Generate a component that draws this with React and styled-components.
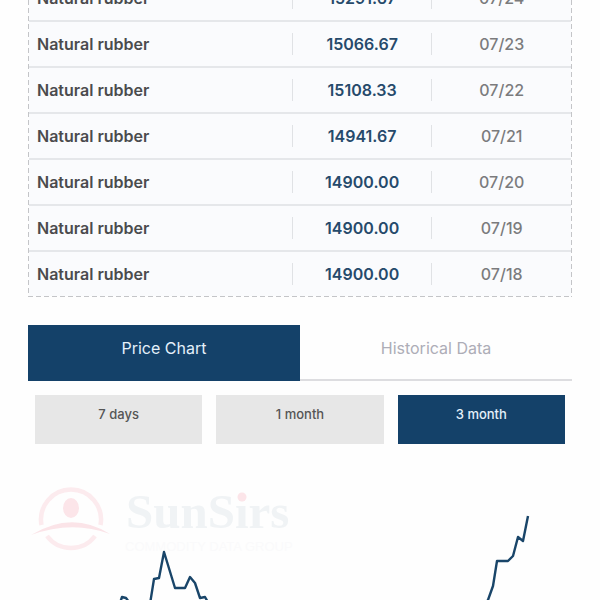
import React, { useState } from 'react';
import styled, { createGlobalStyle } from 'styled-components';

const GlobalStyle = createGlobalStyle`
  html, body {
    margin: 0;
    background: #fefefe;
    overflow: hidden;
  }

  * {
    box-sizing: border-box;
  }
`;

const Page = styled.main`
  padding: 0 28px;
  height: 100vh;
  overflow: hidden;
  font-family: Inter, "Liberation Sans", sans-serif;
`;

/* The list is scrolled, so its first row is cut by the top edge */
const PriceList = styled.section`
  margin-top: -24px;
  padding: 0 1px 1px;
  background:
    repeating-linear-gradient(to bottom, #c4c5c8 0 5px, transparent 5px 8px) left / 1px 100% no-repeat,
    repeating-linear-gradient(to bottom, #c4c5c8 0 5px, transparent 5px 8px) right / 1px 100% no-repeat,
    repeating-linear-gradient(to right, #c4c5c8 0 5px, transparent 5px 8px) bottom / 100% 1px no-repeat;
`;

const PriceTable = styled.table`
  width: 100%;
  table-layout: fixed;
  border-collapse: separate;
  border-spacing: 0;
  background: #fafbfd;
`;

const Row = styled.tr`
  height: 46px;

  &:last-child {
    height: 44px;
  }

  &:not(:last-child) > * {
    border-bottom: 2px solid #e5e7ea;
  }
`;

const Name = styled.th`
  width: 48.5%;
  padding: 0 8px;
  color: #4b4b4d;
  text-align: left;
  font-size: 16px;
  font-weight: 600;
`;

const Cell = styled.td`
  padding: 0;
`;

const CellText = styled.div`
  border-left: 1px solid #e0e2e5;
  color: ${({ $price }) => ($price ? '#264a6b' : '#7b7b7d')};
  text-align: center;
  font-size: 16px;
  font-weight: ${({ $price }) => ($price ? 600 : 500)};
  line-height: 22px;
`;

const Tabs = styled.div`
  display: flex;
  margin-top: 28px;
`;

const Tab = styled.button`
  flex: 1;
  height: 56px;
  padding: 0 0 8px;
  border: none;
  border-bottom: 2px solid ${({ $active }) => ($active ? '#144169' : '#dddde0')};
  background: ${({ $active }) => ($active ? '#144169' : 'transparent')};
  color: ${({ $active }) => ($active ? '#e4f0fa' : '#adadb7')};
  font-family: inherit;
  font-size: 16px;
  cursor: pointer;
`;

const Periods = styled.div`
  display: flex;
  gap: 14px;
  padding: 14px 7px 0;
`;

const PeriodButton = styled.button`
  flex: 1;
  height: 49px;
  padding: 0 0 12px;
  border: none;
  background: ${({ $active }) => ($active ? '#144169' : '#e7e7e7')};
  color: ${({ $active }) => ($active ? '#e4f0fa' : '#555')};
  font-family: inherit;
  font-size: 13px;
  font-weight: 500;
  cursor: pointer;
`;

const Chart = styled.svg`
  display: block;
  width: 100%;
`;

const prices = [
  ['15291.67', '07/24'],
  ['15066.67', '07/23'],
  ['15108.33', '07/22'],
  ['14941.67', '07/21'],
  ['14900.00', '07/20'],
  ['14900.00', '07/19'],
  ['14900.00', '07/18'],
];

const tabs = ['Price Chart', 'Historical Data'];
const periods = ['7 days', '1 month', '3 month'];

const PriceChart = () => (
  <Chart viewBox="0 0 544 260" role="img" aria-label="Natural rubber price chart">
    <g fill="none" stroke="#fcebee" strokeWidth="4.5">
      <path d="M13.5 81 A30 30 0 1 1 72.5 81" />
      <path d="M19 92 A30 30 0 0 0 67 92" />
    </g>
    <path d="M3 91 Q44 66 82 90 Q44 76 3 91Z" fill="#fbe4e8" />
    <ellipse cx="43" cy="64" rx="8" ry="10" fill="#fce5e9" />
    <text x="98" y="84" fill="#f0f3f5" fontFamily="Liberation Serif, serif" fontSize="49" fontWeight="700">
      SunSirs
    </text>
    <circle cx="214" cy="53" r="4.5" fill="#fce5e9" />
    <text x="97" y="107" fill="#fafafb" fontFamily="Liberation Sans, sans-serif" fontSize="13">
      COMMODITY DATA GROUP
    </text>
    <path
      d="M0 205 L40 212 L65 190 L93 156 L94 153 L98 154 L101 158 L112 174 L122 160 L126 135 L131 134 L136 108 L147 144 L157 144 L162 133 L167 139 L172 154 L177 153 L181 160 L210 196 L260 218 L320 205 L390 222 L430 190 L460 156 L465 142 L469 117 L480 117 L485 112 L490 93 L495 97 L500 72"
      fill="none"
      stroke="#194569"
      strokeWidth="2.4"
      strokeLinejoin="round"
    />
  </Chart>
);

const App = () => {
  const [tab, setTab] = useState('Price Chart');
  const [period, setPeriod] = useState('3 month');

  return (
    <Page>
      <GlobalStyle />
      <PriceList>
        <PriceTable>
          <tbody>
            {prices.map(([price, date]) => (
              <Row key={date}>
                <Name scope="row">Natural rubber</Name>
                <Cell><CellText $price>{price}</CellText></Cell>
                <Cell><CellText>{date}</CellText></Cell>
              </Row>
            ))}
          </tbody>
        </PriceTable>
      </PriceList>
      <Tabs>
        {tabs.map((name) => (
          <Tab key={name} $active={name === tab} onClick={() => setTab(name)}>{name}</Tab>
        ))}
      </Tabs>
      <Periods>
        {periods.map((name) => (
          <PeriodButton key={name} $active={name === period} onClick={() => setPeriod(name)}>{name}</PeriodButton>
        ))}
      </Periods>
      <PriceChart />
    </Page>
  );
};

export default App;
